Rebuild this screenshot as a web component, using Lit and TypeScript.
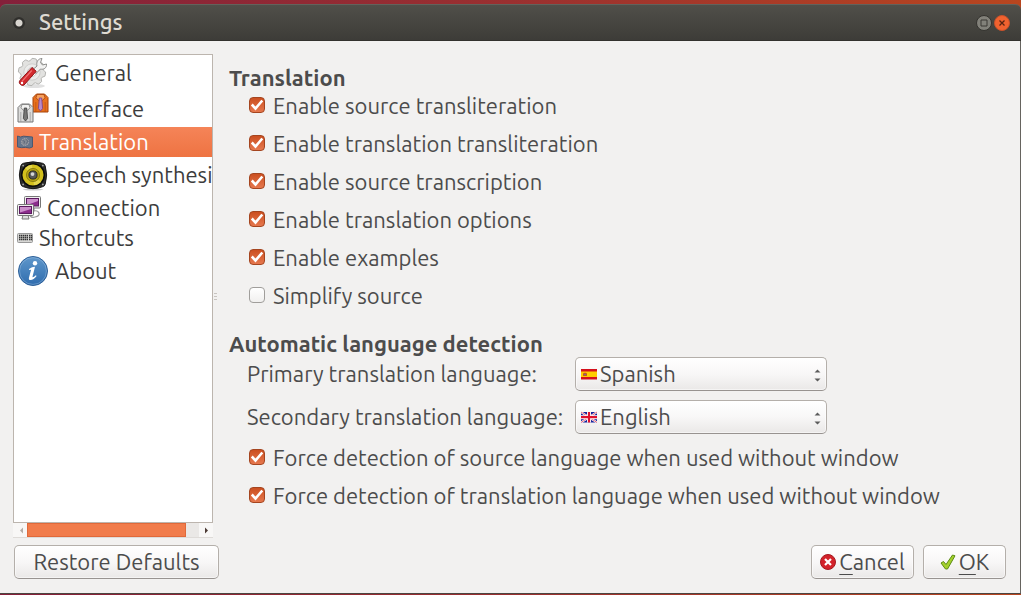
import { LitElement, html, svg, css, TemplateResult } from "lit";
import { customElement, state } from "lit/decorators.js";

interface Page {
  name: string;
  size: "large" | "medium" | "small";
  icon: TemplateResult;
}

const gearPoints = Array.from({ length: 40 }, (_, i) => {
  const r = i % 5 < 3 ? 13.6 : 11.4;
  const a = (i / 40) * Math.PI * 2;
  return `${(15 + Math.cos(a) * r).toFixed(1)},${(15 + Math.sin(a) * r).toFixed(1)}`;
}).join(" ");

const general = html`<svg viewBox="0 0 32 32" aria-hidden="true">
  <ellipse cx="17" cy="29" rx="11" ry="2" fill="#000" opacity=".12"/>
  <polygon points=${gearPoints} fill="#e2e2e0" stroke="#b4b4b1" stroke-linejoin="round"/>
  <circle cx="15" cy="15" r="8.2" fill="#ececeb" stroke="#cfcfcd"/>
  <circle cx="15" cy="15" r="4.5" fill="#fff" stroke="#c5c5c3"/>
  <path d="M16 12.500l4-3.500c-1-4 1-7.500 5-7.500l-1.500 4 2 2.500 4-1c.5 4-3 6-6 5l-4.500 4.500z" fill="#f1f1f0" stroke="#8e8e8c"/>
  <path d="M15 10.500l4.200 3.800L7 28c-2 1.600-6-1.500-4.300-4.200z" fill="#d32a2e" stroke="#921316"/>
  <path d="M14.8 13.500L5 24.400" stroke="#ef7474" stroke-width="1.200"/>
  <circle cx="5" cy="26" r="1.200" fill="#fff"/>
</svg>`;

const shirt = (body: string, light: string, edge: string, tie: string, tieEdge: string) => svg`
  <path d="M1 4.500L4.500 1h8L16 4.500V19H1z" fill=${body} stroke=${edge} stroke-linejoin="round"/>
  <path d="M3.800 9v9.500M13.200 9v9.500" stroke=${edge} stroke-width=".8" opacity=".6"/>
  <path d="M5 1.500l-1 3.300 2.700 2.700 1.800-2.500 1.800 2.500L13 4.800l-1-3.300z" fill=${light} stroke=${edge} stroke-width=".8"/>
  <path d="M7.300 5h2.400l.9 10.500-2.100 2.500-2.100-2.500z" fill=${tie} stroke=${tieEdge} stroke-width=".8"/>`;

const appearance = html`<svg viewBox="0 0 32 32" aria-hidden="true">
  <g transform="translate(15 0)">${shirt("#e8701d", "#f6a15e", "#a8430a", "#b98ac6", "#7b3f86")}</g>
  <g transform="translate(0 10)">${shirt("#dcdcdb", "#f2f2f1", "#777777", "#777776", "#3d3d3d")}</g>
</svg>`;

const flagBadge = html`<svg viewBox="0 0 16 16" aria-hidden="true">
  <path d="M.5 2l3 1 3-.8 9 .8v10l-3 1-4-.6-4 .3-4-.8z" fill="#66758c" stroke="#4b5871"/>
  <circle cx="8" cy="8" r="3.600" fill="#858b96" stroke="#a9a7ac" stroke-dasharray="1.400 .8"/>
  <path d="M5.600 6.500l2 .8-.6 2.400M9 5.200l1.800 2-1.400 2.400" stroke="#5a667a" fill="none"/>
</svg>`;

const speaker = html`<svg viewBox="-1 -1 34 34" aria-hidden="true">
  <path d="M6 3.500Q16 .5 26 3.500q2.500.6 3 3Q32 16 29 25.500q-.5 2.500-3 3Q16 32.500 6 28.500q-2.500-.5-3-3Q0 16 3 6.500q.5-2.400 3-3z" fill="#2d2e2c" stroke="#111"/>
  <ellipse cx="16" cy="31.500" rx="11" ry="1" fill="#000" opacity=".2"/>
  <circle cx="16" cy="16" r="12" fill="#d3c01c" stroke="#0b0b0b" stroke-width="1.600"/>
  <path d="M16 16L7.500 8.500A11 11 0 0 1 15 5zM16 16l8.500 7.500A11 11 0 0 1 17 27z" fill="#efe26a" opacity=".6"/>
  <circle cx="16" cy="16" r="7" fill="#b3a012" stroke="#8a7c10"/>
  <circle cx="16" cy="16" r="4.300" fill="#57585a" stroke="#222"/>
  <circle cx="15.500" cy="15" r="2" fill="#d6d6d6"/>
  <g fill="#a7a7a7"><circle cx="5.500" cy="6" r="1"/><circle cx="26.500" cy="6" r="1"/><circle cx="5.500" cy="26" r="1"/><circle cx="26.500" cy="26" r="1"/></g>
</svg>`;

const network = html`<svg viewBox="0 0 24 24" aria-hidden="true">
  <path d="M17 12v3q4-1 5 2t-4 4q-3 1-5-1" fill="none" stroke="#999" stroke-width="1.200"/>
  <rect x="7.500" y=".5" width="16" height="11.500" rx="1" fill="#f0f0ef" stroke="#777"/>
  <rect x="9.500" y="2.500" width="12" height="7.500" fill="#8b2c8c" stroke="#5b1a5f"/>
  <path d="M10 3h11v2l-11 4z" fill="#e0b0e0" opacity=".75"/>
  <path d="M6 19h5l1 4H5z" fill="#ddd" stroke="#777"/>
  <rect x=".5" y="8.500" width="16" height="11" rx="1" fill="#f0f0ef" stroke="#777"/>
  <rect x="2.500" y="10.500" width="12" height="7" fill="#8b2c8c" stroke="#5b1a5f"/>
  <path d="M3 11h11v2l-11 3.500z" fill="#e0b0e0" opacity=".75"/>
</svg>`;

const keyboard = html`<svg viewBox="0 0 16 16" aria-hidden="true">
  <rect x=".5" y="3.500" width="15" height="9" rx="1" fill="#d7d7d5" stroke="#999"/>
  <path d="M2 5.500h9M2 7.500h9M2 9.500h9M12 5.500h3M12 7.500h3M12 9.500h3" stroke="#333" stroke-width="1.500" stroke-dasharray="1.500 .5"/>
</svg>`;

const info = html`<svg viewBox="0 0 32 32" aria-hidden="true">
  <defs><linearGradient id="blue" x2="0" y2="1"><stop stop-color="#5f97cb"/><stop offset="1" stop-color="#2f6cae"/></linearGradient></defs>
  <circle cx="16" cy="16" r="14.500" fill="url(#blue)" stroke="#2c5f98"/>
  <circle cx="16" cy="16" r="13.400" fill="none" stroke="#a5c6e6" opacity=".4"/>
  <circle cx="18" cy="8.300" r="2.200" fill="#fff"/>
  <path d="M12 14q3-2.200 6-2.200l-2.600 10.400q1.600-.2 3.400-2l.8.800Q16.600 25 13.500 25q-2.200 0-1.500-2.600l2.100-7.600-1.900.2z" fill="#fff"/>
</svg>`;

const spain = html`<svg viewBox="0 0 16 12" aria-hidden="true">
  <path d="M0 1h16v10H0z" fill="#fc0"/><path d="M0 1h16v2.500H0zM0 9h16v2.500H0z" fill="#d5101c"/>
  <path d="M2 5.500l1-.8h2l1 .8V8H2z" fill="#c0601c"/><path d="M3 6h2v1H3z" fill="#8a5a9a"/>
</svg>`;

const britain = html`<svg viewBox="0 0 16 12" aria-hidden="true">
  <path d="M0 1h16v10.500H0z" fill="#15219a"/>
  <path d="M0 1l16 10.500M16 1L0 11.500" stroke="#fff" stroke-width="2"/>
  <path d="M0 1l16 10.500M16 1L0 11.500" stroke="#e0405a" stroke-width=".8"/>
  <path d="M8 1v10.500M0 6.200h16" stroke="#fff" stroke-width="4"/>
  <path d="M8 1v10.500M0 6.200h16" stroke="#e0102c" stroke-width="2.200"/>
</svg>`;

const PAGES: Page[] = [
  { name: "General", size: "large", icon: general },
  { name: "Interface", size: "large", icon: appearance },
  { name: "Translation", size: "small", icon: flagBadge },
  { name: "Speech synthesis", size: "large", icon: speaker },
  { name: "Connection", size: "medium", icon: network },
  { name: "Shortcuts", size: "small", icon: keyboard },
  { name: "About", size: "large", icon: info },
];

@customElement("settings-check")
class SettingsCheck extends LitElement {
  static properties = { label: { type: String }, checked: { type: Boolean } };
  declare label: string;
  declare checked: boolean;

  static styles = css`
    :host { display: block; height: 24px; }
    label { display: inline-flex; align-items: center; gap: 8px; line-height: 24px; white-space: nowrap; }
    input {
      appearance: none; flex: none; width: 16px; height: 16px; margin: 0 0 2px;
      border: 1px solid #a09e9b; border-radius: 4px;
      background: linear-gradient(#fff, #f1f0ef);
    }
    input:checked {
      border-color: #a5451f;
      background:
        url("data:image/svg+xml,%3Csvg xmlns='http://www.w3.org/2000/svg' viewBox='0 0 14 14'%3E%3Cpath d='M1.800 6.500l3.700 4L12.300 2.500' fill='none' stroke='white' stroke-width='2.600'/%3E%3C/svg%3E") center / 14px 14px,
        linear-gradient(#cb4f20, #e6784e);
    }
  `;

  render() {
    return html`<label><input type="checkbox" .checked=${this.checked} />${this.label}</label>`;
  }
}

@customElement("app-root")
class AppRoot extends LitElement {
  @state() private current = "Translation";

  static styles = css`
    :host {
      display: flex; flex-direction: column; box-sizing: border-box; min-height: 100vh;
      padding: 4px 0 1px;
      background: linear-gradient(90deg, #84203a, #9a3030 50%, #b8461f);
      font: 22px/24px Ubuntu, "Noto Sans", sans-serif; color: #4c4c4c;
    }
    * { box-sizing: border-box; }
    svg { display: block; width: 100%; height: 100%; }
    button, select { font: inherit; color: inherit; margin: 0; }
    .titlebar {
      display: flex; align-items: center; height: 37px; padding: 0 11px 0 13px;
      border-top: 1px solid #63625c; border-bottom: 1px solid #33322e; border-radius: 6px 6px 0 0;
      background: linear-gradient(#504f49, #3d3c38); color: #dfdbd2;
    }
    .menu { width: 12px; height: 12px; margin-right: 14px; padding: 0; border: 0; border-radius: 50%;
      background: radial-gradient(circle, #d8d5cf 0 3px, #302f2c 4px); }
    h1 { flex: 1; margin: 0; padding-bottom: 2px; font-size: 22px; font-weight: 500; line-height: 24px; }
    .control { width: 16px; height: 16px; margin-left: 2px; padding: 0; border: 0; background: none; }
    .window {
      flex: 1; display: flex; flex-direction: column; gap: 7px; padding: 13px 14px 14px 13px;
      background: #f2f1f0; border-right: 1px solid #66645f; border-bottom: 1px solid #4c4540;
    }
    .content { flex: 1; display: flex; }
    .sidebar { display: flex; flex-direction: column; flex: none; width: 200px; }
    nav { flex: 1; border: 1px solid #bcb5ae; background: #fff; overflow: hidden; color: #3c3c3c; }
    ul { list-style: none; margin: 0; padding: 0; }
    .page {
      display: flex; align-items: center; gap: 6px; width: 100%; height: 30px;
      padding: 0 0 0 3px; border: 0; background: none; white-space: nowrap; text-align: left;
    }
    .page.large { height: 36px; }
    .page.active { background: linear-gradient(#f58458, #ee7342); color: #fff; }
    .icon { flex: none; width: 32px; height: 32px; }
    .icon.medium { width: 24px; height: 24px; }
    .icon.small { width: 16px; height: 16px; }
    .scroll { display: flex; height: 15px; background: #eae8e6; border-bottom: 1px solid #dedbd8; }
    .scroll button { width: 14px; padding: 0; border: 0; background: #f8f7f6; }
    .thumb { flex: 1; margin-right: 13px; background: #f17c4b; border: 1px solid #e0693a; }
    .handle { display: flex; flex-direction: column; justify-content: center; gap: 2px; width: 16px; padding-left: 1px; }
    .handle i { width: 3px; height: 1px; background: #c8c4c0; }
    main { flex: 1; min-width: 0; padding-top: 12px; }
    h2 { margin: 0; font-size: 22px; line-height: 24px; font-weight: 700; white-space: nowrap; }
    .checks { display: grid; gap: 14px; padding: 3px 0 25px 20px; }
    .languages {
      display: grid; grid-template-columns: max-content 252px; column-gap: 8px; row-gap: 9px;
      align-items: center; padding: 1px 0 0 18px;
    }
    .languages label { width: 320px; white-space: nowrap; }
    .languages + .checks { padding: 11px 0 0 20px; }
    .combo { position: relative; }
    .flag { position: absolute; left: 6px; top: 11px; width: 16px; height: 12px; pointer-events: none; }
    .arrows { position: absolute; right: 6px; top: 12px; width: 7px; height: 13px; pointer-events: none; }
    select, .push {
      height: 34px; border: 1px solid #b4afaa; border-bottom-color: #989390; border-radius: 5px;
      background: linear-gradient(#fff, #f8f7f7 50%, #eae8e7); box-shadow: inset 0 0 0 1px #ffffff80;
    }
    select { appearance: none; display: block; width: 100%; padding: 0 24px; }
    footer { display: flex; gap: 9px; padding-left: 1px; }
    .push { display: flex; align-items: center; justify-content: center; gap: 3px; padding: 0; }
    .restore { width: 205px; margin-right: auto; }
    .cancel { width: 103px; }
    .ok { width: 83px; }
    .glyph { width: 16px; height: 16px; }
    u { text-underline-offset: 4px; text-decoration-thickness: 1px; }
  `;

  private arrows() {
    return html`<span class="arrows"><svg viewBox="0 0 7 13" aria-hidden="true"><path d="M.5 3.500L3.500.5l3 3zM.5 9.500l3 3 3-3z" fill="#5c5c5c"/></svg></span>`;
  }

  private checks(items: [string, boolean][]) {
    return html`<div class="checks">
      ${items.map(([label, on]) => html`<settings-check .label=${label} .checked=${on}></settings-check>`)}
    </div>`;
  }

  render() {
    return html`
      <header class="titlebar">
        <button class="menu" aria-label="Window menu"></button>
        <h1>Settings</h1>
        <button class="control" aria-label="Maximize">
          <svg viewBox="0 0 16 16"><circle cx="8" cy="8" r="7.500" fill="#82817a" stroke="#34332f"/><path d="M5 5h6v6H5z" fill="none" stroke="#3a3935"/></svg>
        </button>
        <button class="control" aria-label="Close">
          <svg viewBox="0 0 16 16"><circle cx="8" cy="8" r="7.500" fill="#f0622f" stroke="#c9512a"/><path d="M5.500 5.500l5 5M10.500 5.500l-5 5" stroke="#592411" stroke-width="1.300"/></svg>
        </button>
      </header>
      <div class="window">
        <div class="content">
          <div class="sidebar">
            <nav aria-label="Pages"><ul>
              ${PAGES.map((p) => html`<li>
                <button class="page ${p.size} ${p.name === this.current ? "active" : ""}" @click=${() => (this.current = p.name)}>
                  <span class="icon ${p.size}">${p.icon}</span>${p.name}
                </button></li>`)}
            </ul></nav>
            <div class="scroll">
              <button aria-label="Scroll left"><svg viewBox="0 0 14 14"><path d="M10 4.500v6L7 7.500z" fill="#b3aca6"/></svg></button>
              <div class="thumb"></div>
              <button aria-label="Scroll right"><svg viewBox="0 0 14 14"><path d="M6 4.500v6L9 7.500z" fill="#4c3a34"/></svg></button>
            </div>
          </div>
          <div class="handle"><i></i><i></i><i></i></div>
          <main>
            <h2>Translation</h2>
            ${this.checks([
              ["Enable source transliteration", true],
              ["Enable translation transliteration", true],
              ["Enable source transcription", true],
              ["Enable translation options", true],
              ["Enable examples", true],
              ["Simplify source", false],
            ])}
            <h2>Automatic language detection</h2>
            <div class="languages">
              <label for="primary">Primary translation language:</label>
              <div class="combo">
                <select id="primary"><option>Spanish</option></select>
                <span class="flag">${spain}</span>${this.arrows()}
              </div>
              <label for="secondary">Secondary translation language:</label>
              <div class="combo">
                <select id="secondary"><option>English</option></select>
                <span class="flag">${britain}</span>${this.arrows()}
              </div>
            </div>
            ${this.checks([
              ["Force detection of source language when used without window", true],
              ["Force detection of translation language when used without window", true],
            ])}
          </main>
        </div>
        <footer>
          <button class="push restore">Restore Defaults</button>
          <button class="push cancel">
            <span class="glyph"><svg viewBox="0 0 16 16" aria-hidden="true"><circle cx="8" cy="8" r="7.500" fill="#d3222a" stroke="#a51a20"/><path d="M5 5l6 6M11 5l-6 6" stroke="#fff" stroke-width="2.200"/></svg></span>
            <span><u>C</u>ancel</span>
          </button>
          <button class="push ok">
            <span class="glyph"><svg viewBox="0 0 16 16" aria-hidden="true"><path d="M1 9l2.500-1.500L6 10.500 12.500 1l2.500.800L7.500 15H5.500z" fill="#a4d12c" stroke="#5c8c14"/></svg></span>
            <span><u>O</u>K</span>
          </button>
        </footer>
      </div>
    `;
  }
}
